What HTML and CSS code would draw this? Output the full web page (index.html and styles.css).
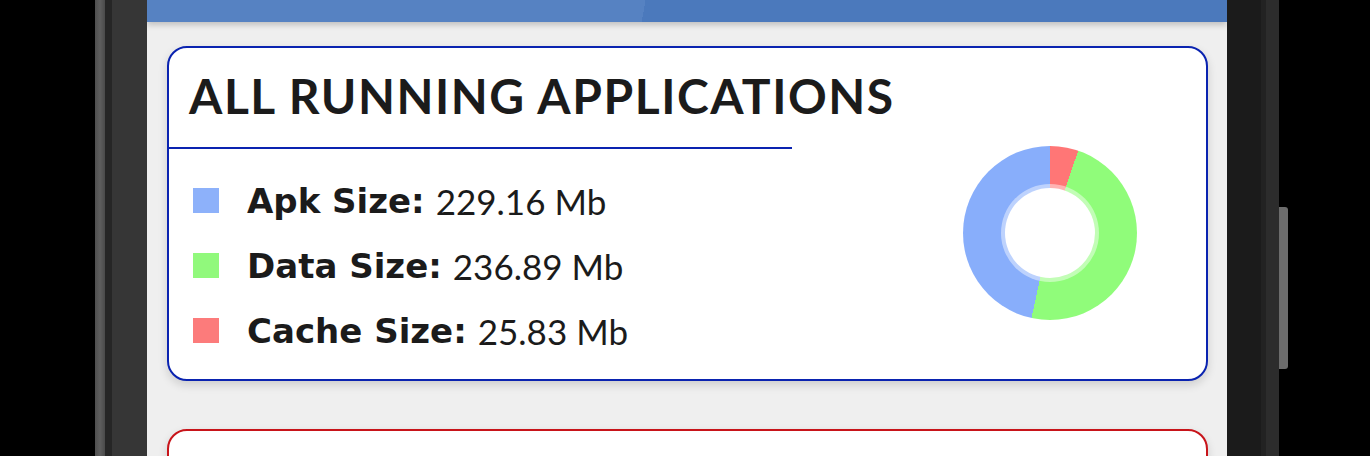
FILE: index.html
```html
<!DOCTYPE html>
<html lang="en">
    <head>
        <meta charset="UTF-8" />
        <meta name="viewport" content="width=device-width, initial-scale=1.0" />
        <title>Running Applications</title>
        <link rel="stylesheet" href="styles.css">
    </head>

    <body>
        <div class="device">
            <div class="bezel-left">
                <div class="edge"></div>
                <div class="rim"></div>
            </div>

            <div class="screen">
                <div class="topbar"></div>

                <div class="card card-blue">
                    <div class="card-main">
                        <h1 class="card-title">ALL RUNNING APPLICATIONS</h1>
                        <div class="divider"></div>

                        <ul class="legend">
                            <li class="legend-row">
                                <span class="swatch apk"></span>
                                <b>Apk Size:</b><span class="value">229.16 Mb</span>
                            </li>
                            <li class="legend-row">
                                <span class="swatch data"></span>
                                <b>Data Size:</b><span class="value">236.89 Mb</span>
                            </li>
                            <li class="legend-row">
                                <span class="swatch cache"></span>
                                <b>Cache Size:</b><span class="value">25.83 Mb</span>
                            </li>
                        </ul>
                    </div>

                    <div class="card-chart">
                        <!-- angles from the sizes: cache 5.25%, data 48.16%, apk 46.59% -->
                        <div class="donut">
                            <div class="donut-hole"></div>
                        </div>
                    </div>
                </div>

                <div class="card card-red"></div>
            </div>

            <div class="bezel-right">
                <div class="rim"></div>
                <div class="edge"></div>
            </div>
            <div class="side-button"></div>
        </div>
    </body>
</html>
```

FILE: styles.css
```css
body {
    margin: 0;
    padding: 0;
    background: #000;
    font-family: Lato, "Open Sans", sans-serif;
    color: #1b1b1b;
    overflow: hidden;
}

.device {
    display: flex;
    height: 456px;
    padding-left: 95px;
}

/* phone frame */
.bezel-left {
    display: flex;
    width: 52px;
}

.bezel-left .edge {
    width: 10px;
    background: linear-gradient(90deg, #4f4f4f, #5e5e5e 50%, #4a4a4a);
}

.bezel-left .rim {
    flex: 1;
    background: linear-gradient(90deg, #262626 0 7px, #363636 7px);
}

.bezel-right {
    display: flex;
    width: 52px;
}

.bezel-right .rim {
    flex: 1;
    background: #1b1b1b;
}

.bezel-right .edge {
    width: 18px;
    background: linear-gradient(90deg, #222 0 5px, #2c2c2c 5px);
}

.side-button {
    width: 9px;
    height: 162px;
    margin-top: 207px;
    background: #6c6c6c;
    border-radius: 0 3px 3px 0;
}

/* screen */
.screen {
    width: 1080px;
    background: #efefef;
    display: flex;
    flex-direction: column;
    gap: 48px;
    overflow: hidden;
}

.screen > * {
    flex-shrink: 0;
}

.topbar {
    height: 22px;
    margin-bottom: -24px;
    background: linear-gradient(100deg, #5682c2 0 46%, #4b79bc 46%);
    box-shadow: 0 3px 6px rgba(0, 0, 0, 0.2);
}

.card {
    margin: 0 19px 0 20px;
    background: #fff;
    border: 2px solid;
    border-radius: 20px;
    box-shadow: 0 4px 10px rgba(0, 0, 0, 0.14);
}

.card-blue {
    border-color: #0a23b0;
    display: flex;
    box-sizing: border-box;
    height: 335px;
}

.card-red {
    border-color: #c8141a;
    height: 60px;
}

.card-main {
    width: 623px;
}

.card-title {
    margin: 0;
    padding: 20px 0 23px 20px;
    font-size: 48px;
    line-height: 56px;
    font-weight: 700;
    letter-spacing: 1.55px;
    white-space: nowrap;
}

.divider {
    height: 2px;
    background: #0a23b0;
}

.legend {
    list-style: none;
    margin: 0;
    padding: 19px 0 0 24px;
}

.legend-row {
    display: flex;
    align-items: center;
    height: 65px;
    font-size: 35px;
    white-space: nowrap;
}

.legend-row b {
    font-family: "DejaVu Sans", Lato, sans-serif;
    font-weight: 700;
    font-size: 34px;
    margin-right: 11px;
}

.value {
    font-weight: 400;
}

.swatch {
    width: 26px;
    height: 25px;
    margin-right: 28px;
}

.swatch.apk {
    background: #8db1fa;
}

.swatch.data {
    background: #91f97c;
}

.swatch.cache {
    background: #fc7b7b;
}

/* chart */
.card-chart {
    flex: 1;
    display: flex;
    justify-content: flex-end;
    padding: 98px 69px 0 0;
}

.donut {
    width: 174px;
    height: 174px;
    border-radius: 50%;
    background: conic-gradient(#ff7676 0 18.9deg, #90fc7a 18.9deg 192.3deg, #88aefb 192.3deg 360deg);
    display: flex;
    align-items: center;
    justify-content: center;
}

.donut-hole {
    width: 90px;
    height: 90px;
    border-radius: 50%;
    background: #fff;
    box-shadow: 0 0 0 4px rgba(255, 255, 255, 0.45);
}
```
